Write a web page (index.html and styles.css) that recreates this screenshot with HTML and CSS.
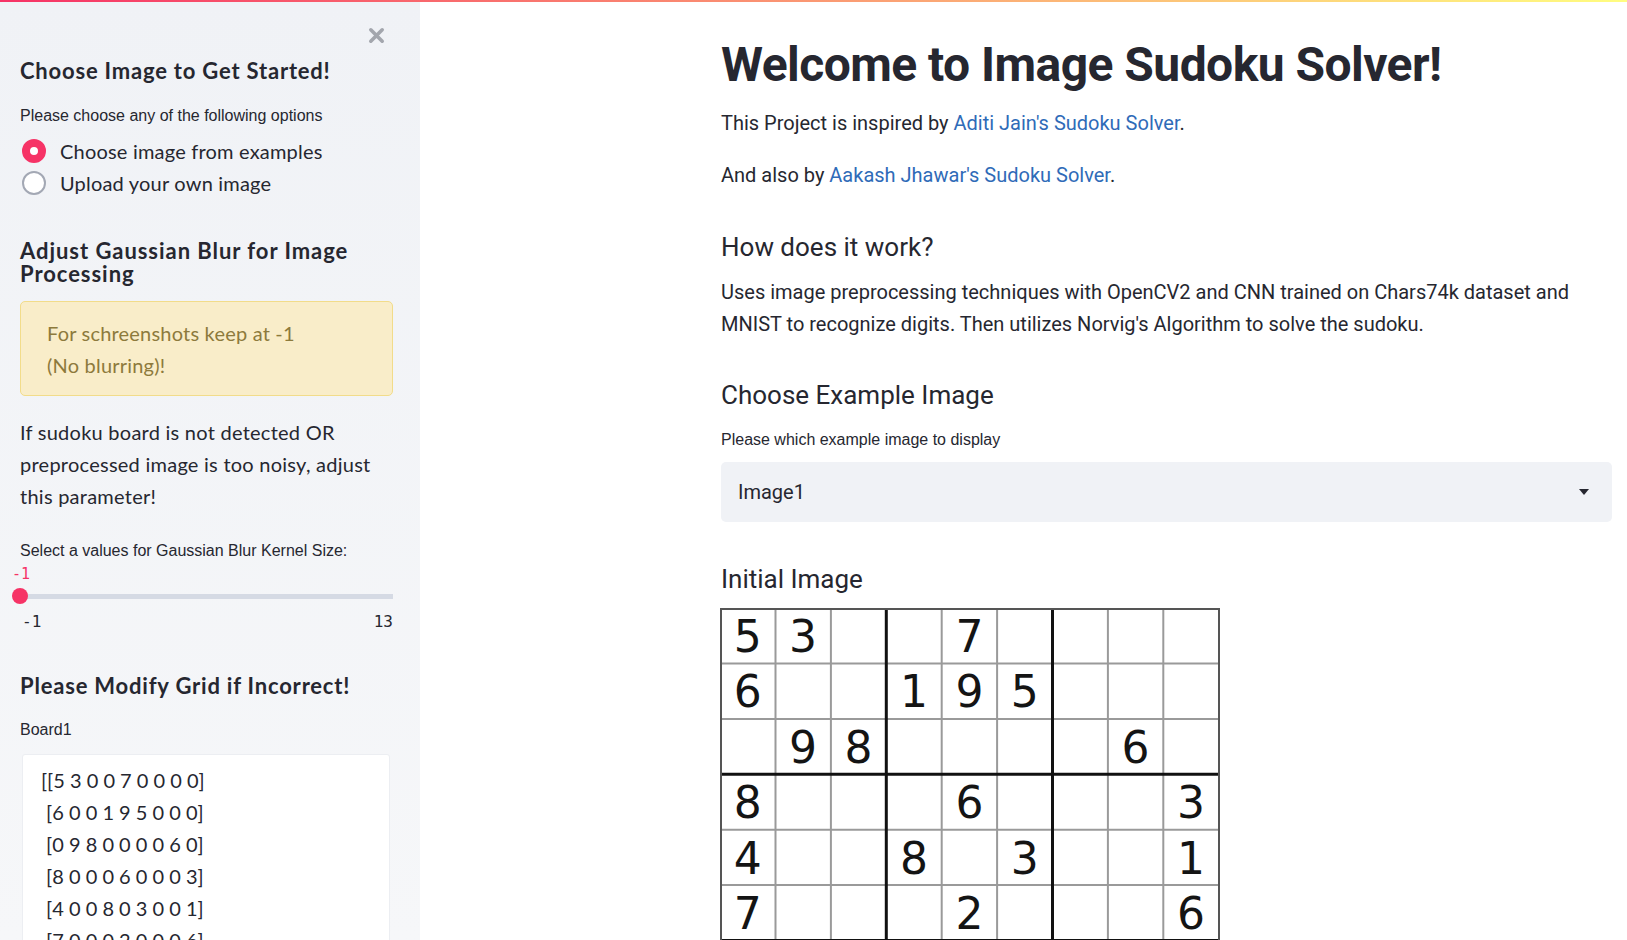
FILE: index.html
```html
<!DOCTYPE html>
<html lang="en">
<head>
<meta charset="utf-8">
<title>Image Sudoku Solver</title>
<link rel="stylesheet" href="styles.css">
</head>
<body>
<div class="decoration"></div>
<div class="app">
  <aside class="sidebar">
    <div class="close-row">
      <svg class="close" width="17" height="17" viewBox="0 0 17 17"><path d="M2.8 2.8 L14.2 14.2 M14.2 2.8 L2.8 14.2" stroke="#a3a6ad" stroke-width="3.6" stroke-linecap="round"/></svg>
    </div>
    <h2 class="side-h first">Choose Image to Get Started!</h2>
    <div class="wlabel side-label1">Please choose any of the following options</div>
    <div class="radios">
      <div class="radio-row"><span class="radio on"></span><span class="radio-text">Choose image from examples</span></div>
      <div class="radio-row"><span class="radio"></span><span class="radio-text">Upload your own image</span></div>
    </div>
    <h2 class="side-h two">Adjust Gaussian Blur for Image Processing</h2>
    <div class="warning">For schreenshots keep at -1<br>(No blurring)!</div>
    <p class="side-p">If sudoku board is not detected OR preprocessed image is too noisy, adjust this parameter!</p>
    <div class="wlabel slider-label">Select a values for Gaussian Blur Kernel Size:</div>
    <div class="slider-value"><span>-1</span></div>
    <div class="slider-track"><span class="thumb"></span></div>
    <div class="ticks"><span>-1</span><span>13</span></div>
    <h2 class="side-h three">Please Modify Grid if Incorrect!</h2>
    <div class="wlabel board-label">Board1</div>
    <div class="textarea">
      <div class="tline">[[5 3 0 0 7 0 0 0 0]</div>
      <div class="tline"> [6 0 0 1 9 5 0 0 0]</div>
      <div class="tline"> [0 9 8 0 0 0 0 6 0]</div>
      <div class="tline"> [8 0 0 0 6 0 0 0 3]</div>
      <div class="tline"> [4 0 0 8 0 3 0 0 1]</div>
      <div class="tline"> [7 0 0 0 2 0 0 0 6]</div>
      <div class="tline"> [0 6 0 0 0 0 2 8 0]</div>
    </div>
  </aside>
  <main class="main">
    <h1 class="title">Welcome to Image Sudoku Solver!</h1>
    <p class="mp p1">This Project is inspired by <a href="#">Aditi Jain's Sudoku Solver</a>.</p>
    <p class="mp p2">And also by <a href="#">Aakash Jhawar's Sudoku Solver</a>.</p>
    <h3 class="mh h-how">How does it work?</h3>
    <p class="mp p3">Uses image preprocessing techniques with OpenCV2 and CNN trained on Chars74k dataset and<br>MNIST to recognize digits. Then utilizes Norvig's Algorithm to solve the sudoku.</p>
    <h3 class="mh h-choose">Choose Example Image</h3>
    <div class="wlabel main-label">Please which example image to display</div>
    <div class="select"><span class="select-text">Image1</span><svg class="caret" width="10" height="6" viewBox="0 0 10 6"><path d="M0 0 H10 L5 6 Z" fill="#262730"/></svg></div>
    <h3 class="mh h-initial">Initial Image</h3>
    <svg class="sudoku" width="500" height="500" viewBox="0 0 500 500">
      <rect x="0" y="0" width="500" height="500" fill="#fff"/>
      <g stroke="#9a9a9a" stroke-width="2">
        <line x1="55.5" y1="0" x2="55.5" y2="500"/>
        <line x1="110.9" y1="0" x2="110.9" y2="500"/>
        <line x1="221.7" y1="0" x2="221.7" y2="500"/>
        <line x1="277.1" y1="0" x2="277.1" y2="500"/>
        <line x1="387.9" y1="0" x2="387.9" y2="500"/>
        <line x1="443.3" y1="0" x2="443.3" y2="500"/>
        <line y1="55.5" x1="0" y2="55.5" x2="500"/>
        <line y1="110.9" x1="0" y2="110.9" x2="500"/>
        <line y1="221.7" x1="0" y2="221.7" x2="500"/>
        <line y1="277.1" x1="0" y2="277.1" x2="500"/>
        <line y1="387.9" x1="0" y2="387.9" x2="500"/>
        <line y1="443.3" x1="0" y2="443.3" x2="500"/>
      </g>
      <g stroke="#111" stroke-width="3">
        <line x1="166.3" y1="0" x2="166.3" y2="500"/>
        <line x1="332.5" y1="0" x2="332.5" y2="500"/>
        <line y1="166.3" x1="0" y2="166.3" x2="500"/>
        <line y1="332.5" x1="0" y2="332.5" x2="500"/>
      </g>
      <rect x="1" y="1" width="498" height="498" fill="none" stroke="#555" stroke-width="2"/>
      <g class="digits" text-anchor="middle">
        <text x="27.7" y="44">5</text><text x="83.1" y="44">3</text><text x="249.4" y="44">7</text>
        <text x="27.7" y="99.4">6</text><text x="194" y="99.4">1</text><text x="249.4" y="99.4">9</text><text x="304.8" y="99.4">5</text>
        <text x="83.1" y="154.8">9</text><text x="138.5" y="154.8">8</text><text x="415.6" y="154.8">6</text>
        <text x="27.7" y="210.2">8</text><text x="249.4" y="210.2">6</text><text x="471" y="210.2">3</text>
        <text x="27.7" y="265.6">4</text><text x="194" y="265.6">8</text><text x="304.8" y="265.6">3</text><text x="471" y="265.6">1</text>
        <text x="27.7" y="321">7</text><text x="249.4" y="321">2</text><text x="471" y="321">6</text>
        <text x="83.1" y="376.4">6</text><text x="360.2" y="376.4">2</text><text x="415.6" y="376.4">8</text>
        <text x="194" y="431.8">4</text><text x="249.4" y="431.8">1</text><text x="304.8" y="431.8">9</text><text x="471" y="431.8">5</text>
        <text x="249.4" y="487.2">8</text><text x="415.6" y="487.2">7</text><text x="471" y="487.2">9</text>
      </g>
    </svg>
  </main>
</div>
</body>
</html>
```
FILE: styles.css
```css
* { box-sizing: border-box; }
html, body { margin: 0; padding: 0; }
body {
  font-family: "Lato", "Noto Sans", sans-serif;
  color: #262730;
  background: #fff;
  overflow: hidden;
}
.decoration {
  position: fixed;
  top: 0; left: 0; right: 0;
  height: 2px;
  background: linear-gradient(90deg, #f63366, #fffd80);
  z-index: 10;
}
.app {
  display: flex;
  height: 100vh;
  overflow: hidden;
}
.sidebar {
  width: 420px;
  flex-shrink: 0;
  height: 100vh;
  overflow: hidden;
  background: linear-gradient(180deg, #f0f2f6 0%, #f6f7f9 100%);
  padding: 0 27px 0 20px;
}
.close-row {
  display: flex;
  justify-content: flex-end;
  align-items: center;
  height: 24px;
  margin-top: 23px;
  padding-right: 8px;
}
.side-h {
  margin: 0;
  font-family: "Lato", sans-serif;
  font-weight: 700;
  font-size: 22px;
  line-height: 30px;
  letter-spacing: 0.8px;
  color: #262730;
}
.side-h.first { margin-top: 9px; }
.side-h.two { margin-top: 41px; line-height: 22.5px; letter-spacing: 0.95px; }
.side-h.three { margin-top: 40px; }
.wlabel {
  font-family: "Liberation Sans", Arial, sans-serif;
  font-size: 16px;
  line-height: 20px;
  color: #262730;
}
.side-label1 { margin-top: 20px; }
.radios { margin-top: 9px; }
.radio-row {
  display: flex;
  align-items: center;
  height: 32px;
}
.radio {
  width: 24px;
  height: 24px;
  border-radius: 50%;
  border: 2.5px solid #a3a8b4;
  background: #fff;
  margin-left: 2px;
  flex-shrink: 0;
}
.radio.on {
  border: 8px solid #f63366;
  background: #fff;
}
.radio-text {
  margin-left: 14px;
  font-size: 20px;
  letter-spacing: 0.2px;
  color: #262730;
}
.warning {
  margin-top: 16px;
  background: #f9edc9;
  border: 1px solid #f2dc8a;
  border-radius: 5px;
  padding: 15px 20px 14px 26px;
  font-size: 20px;
  line-height: 32px;
  letter-spacing: 0.2px;
  color: #8d7a3c;
}
.side-p {
  margin: 20px 0 0;
  font-size: 20px;
  line-height: 32px;
  letter-spacing: 0.25px;
  color: #262730;
}
.slider-label { margin-top: 29px; }
.slider-value {
  margin-top: 5px;
  height: 16px;
  display: flex;
  font-family: "DejaVu Sans Mono", "Liberation Mono", monospace;
  font-size: 15px;
  line-height: 16px;
  color: #f63366;
  margin-left: -8px;
}
.slider-track {
  margin-top: 6px;
  height: 16px;
  display: flex;
  align-items: center;
  background: linear-gradient(#d5dae4, #d5dae4) center / 100% 5px no-repeat;
  border-radius: 3px;
}
.thumb {
  width: 16px;
  height: 16px;
  border-radius: 50%;
  background: #f63366;
  margin-left: -8px;
}
.ticks {
  margin-top: 9px;
  display: flex;
  justify-content: space-between;
  font-family: "DejaVu Sans Mono", "Liberation Mono", monospace;
  font-size: 16px;
  line-height: 18px;
  color: #262730;
  padding-left: 2px;
}
.board-label { margin-top: 19px; }
.textarea {
  margin: 14px 3px 0 2px;
  background: #fff;
  border: 1px solid #eceef2;
  border-radius: 3px;
  padding: 9px 0 0 18px;
  font-size: 20px;
  line-height: 32px;
  color: #262730;
  height: 400px;
}
.tline { white-space: pre; }
.main {
  flex: 1;
  height: 100vh;
  overflow: hidden;
  padding: 35px 15px 0 301px;
  font-family: "Roboto", "Lato", sans-serif;
}
.title {
  margin: 0;
  font-family: "Roboto", sans-serif;
  font-weight: 700;
  font-size: 48px;
  line-height: 60px;
  letter-spacing: -0.55px;
  color: #262730;
}
.mp {
  margin: 0;
  font-size: 20px;
  line-height: 32px;
  color: #262730;
}
.mp a { color: #2f6bb8; text-decoration: none; }
.p1 { margin-top: 12px; }
.p2 { margin-top: 20px; }
.mh {
  margin: 0;
  font-weight: 400;
  font-size: 26px;
  line-height: 36px;
  color: #262730;
}
.h-how { margin-top: 38px; }
.p3 { margin-top: 11px; }
.h-choose { margin-top: 37px; }
.main-label { margin-top: 17px; font-size: 16px; }
.select {
  margin-top: 12px;
  height: 60px;
  background: #f0f2f6;
  border-radius: 5px;
  display: flex;
  align-items: center;
  justify-content: space-between;
  padding: 0 23px 0 17px;
}
.select-text { font-size: 20px; color: #262730; }
.h-initial { margin-top: 39px; }
.sudoku {
  display: block;
  margin-top: 11px;
  margin-left: -1px;
}
.digits text {
  font-family: "DejaVu Sans", Verdana, sans-serif;
  font-size: 44px;
  fill: #141414;
}
```
